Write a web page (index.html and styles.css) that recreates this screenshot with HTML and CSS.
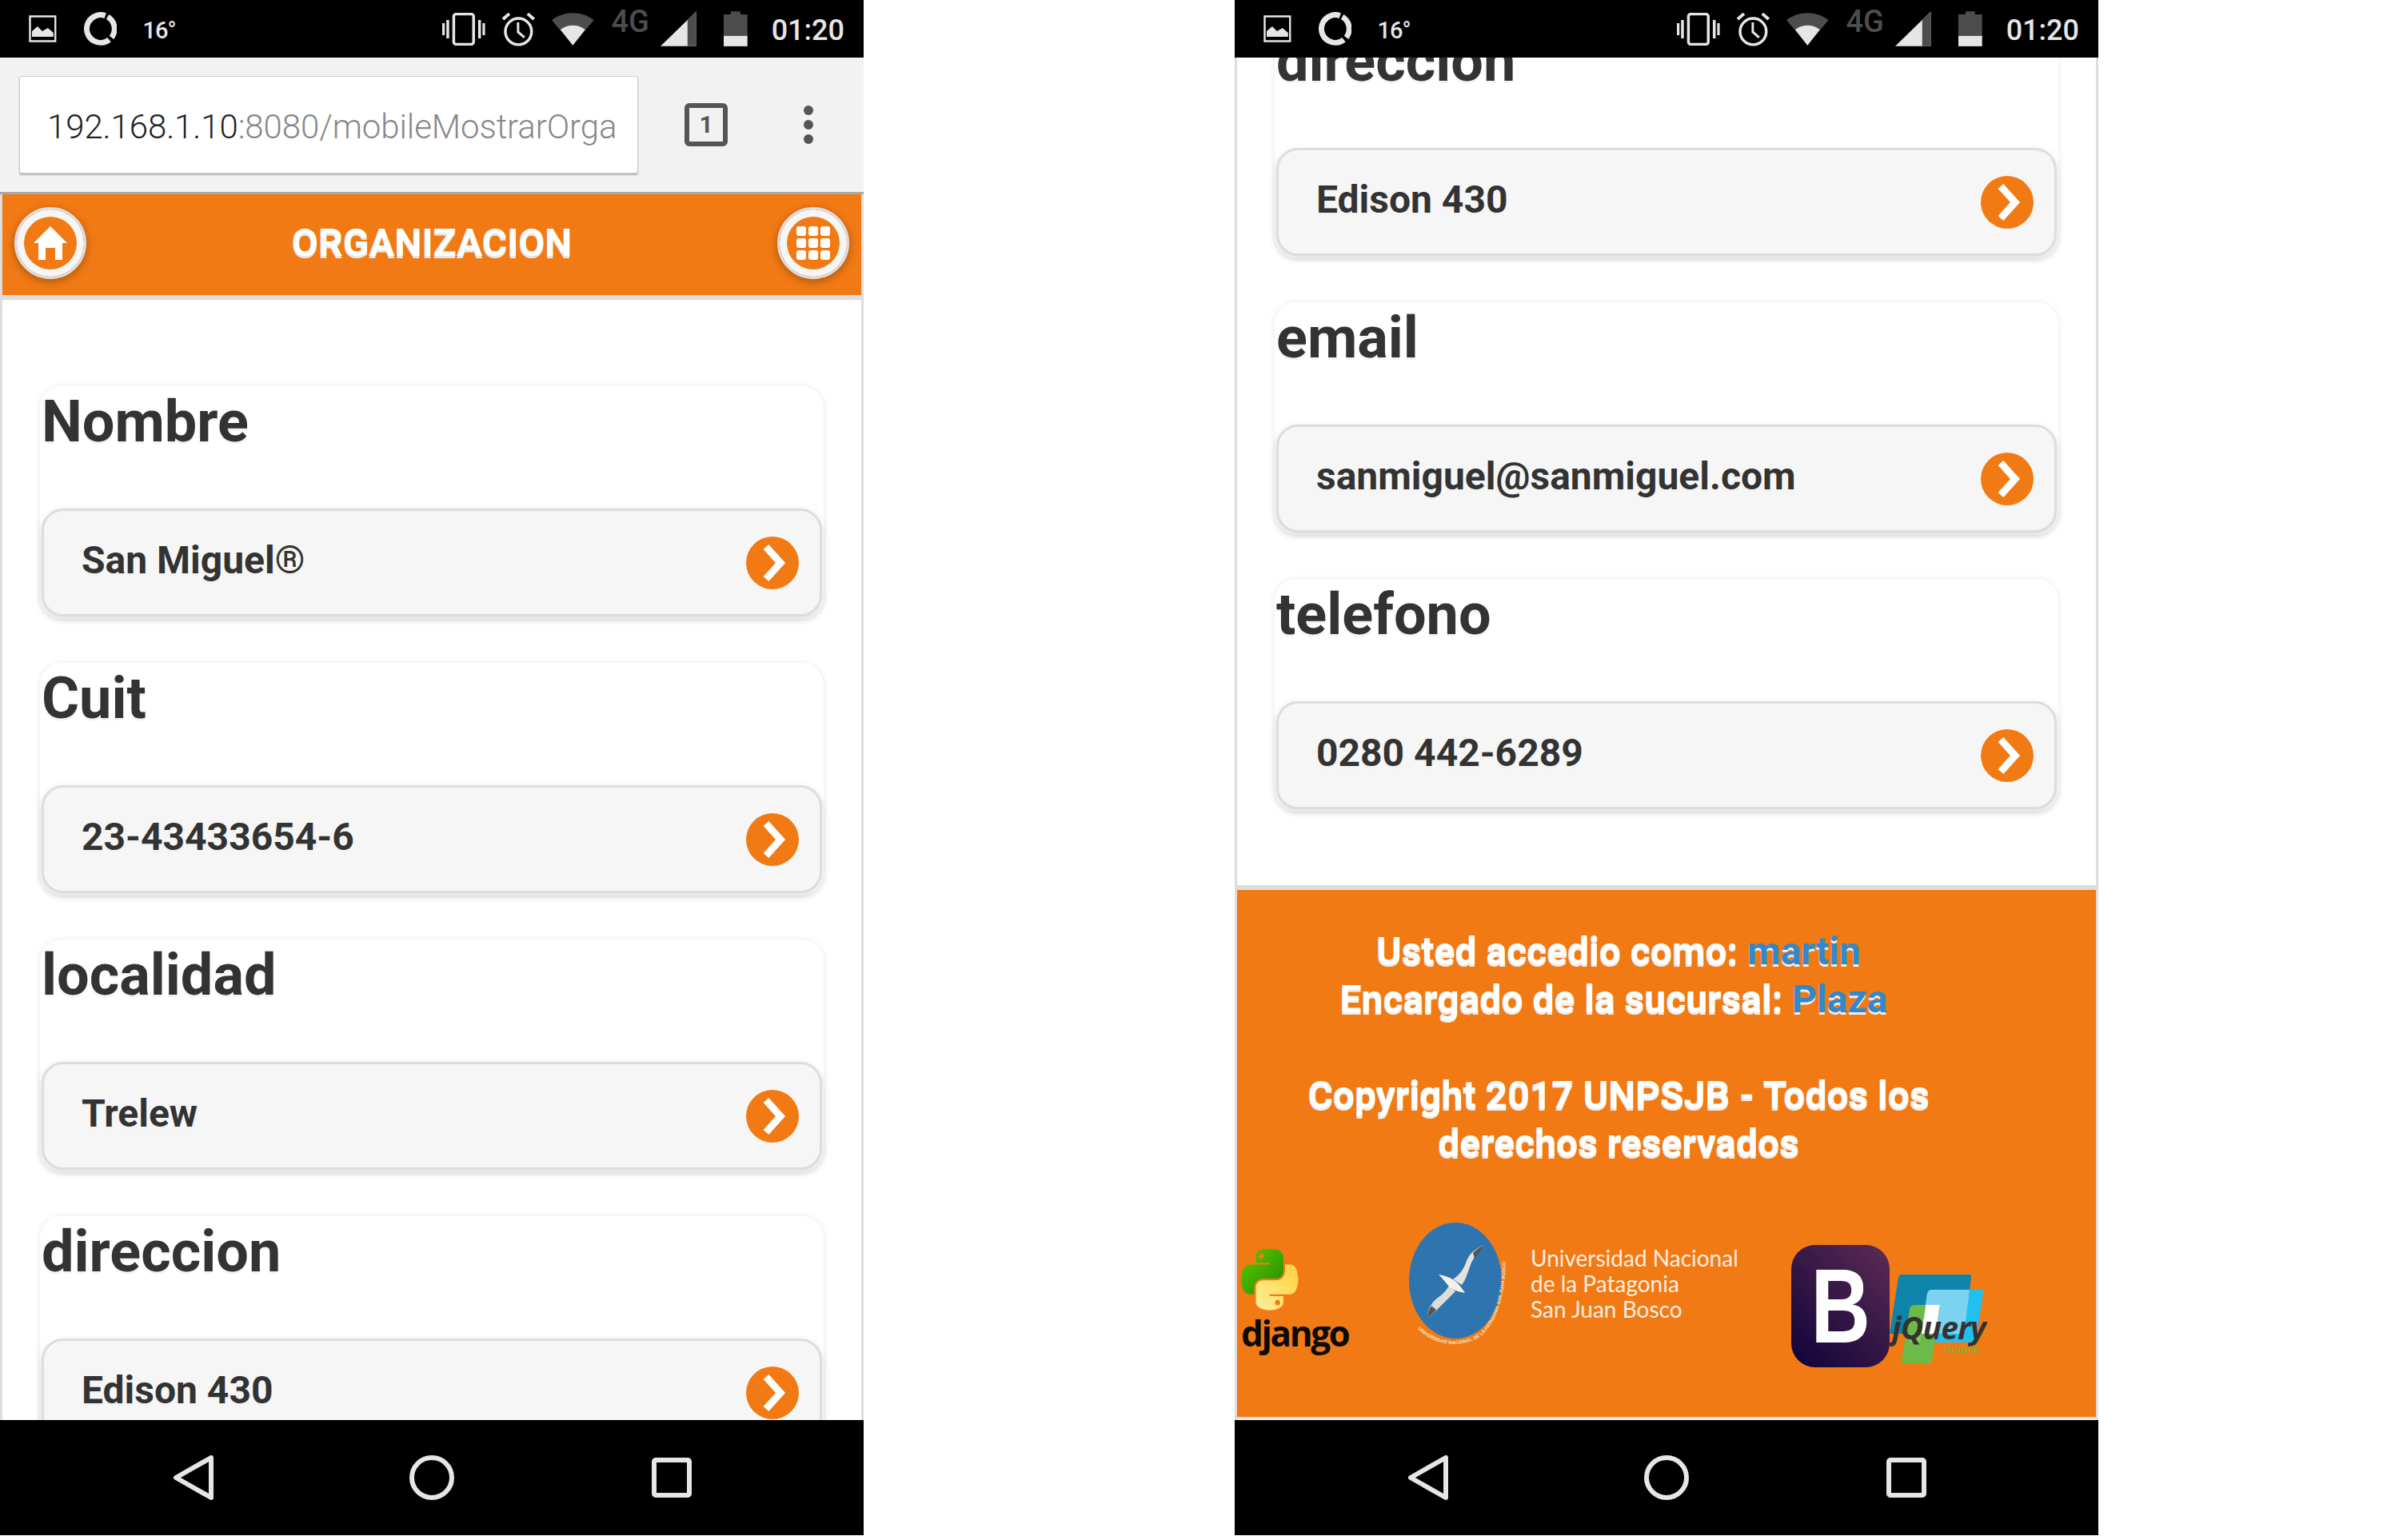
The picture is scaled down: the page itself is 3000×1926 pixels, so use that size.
FILE: index.html
```html
<!DOCTYPE html>
<html lang="es">
<head>
    <meta charset="UTF-8">
    <title>Organizacion</title>
    <link rel="stylesheet" href="styles.css">
</head>
<body>

<svg class="defs" width="0" height="0">
    <symbol id="i-image" viewBox="0 0 35 34">
        <path d="M1.5 1.5H33.5V32.5H1.5Z" fill="none" stroke="#e6e6e6" stroke-width="2.5"/>
        <path d="M4 27V20L11 14L17 20L24 16L31 22V27Z" fill="#e6e6e6"/>
    </symbol>
    <symbol id="i-sync" viewBox="0 0 42 42">
        <circle cx="21" cy="21" r="17.5" fill="none" stroke="#e6e6e6" stroke-width="7" stroke-dasharray="30 4 72 4" transform="rotate(-60 21 21)"/>
    </symbol>
    <symbol id="i-vibrate" viewBox="0 0 54 41">
        <rect x="14.5" y="1.5" width="25" height="38" rx="3" fill="none" stroke="#e6e6e6" stroke-width="3.5"/>
        <path d="M7 9V32M1.5 13V28M47 9V32M52.5 13V28" stroke="#e6e6e6" stroke-width="3.5"/>
    </symbol>
    <symbol id="i-alarm" viewBox="0 0 43 43">
        <circle cx="21.5" cy="24.5" r="16.5" fill="none" stroke="#e6e6e6" stroke-width="3.5"/>
        <path d="M21 13V25L29 32" fill="none" stroke="#e6e6e6" stroke-width="3"/>
        <path d="M2 9L10 2M41 9L33 2" stroke="#e6e6e6" stroke-width="4"/>
    </symbol>
    <symbol id="i-wifi" viewBox="0 0 53 41">
        <path d="M26.5 41L0 9C15 -3 38 -3 53 9Z" fill="#4d4d4d"/>
        <path d="M26.5 41L11 21C20 14 33 14 42 21Z" fill="#e6e6e6"/>
    </symbol>
    <symbol id="i-signal" viewBox="0 0 45 44">
        <path d="M0 44L45 0V44Z" fill="#e6e6e6"/>
        <path d="M34 11L45 0V44H34Z" fill="#4d4d4d"/>
    </symbol>
    <symbol id="i-battery" viewBox="0 0 30 44">
        <path d="M0 4H9V0H21V4H30V44H0Z" fill="#4d4d4d"/>
        <rect y="31" width="30" height="13" fill="#e6e6e6"/>
    </symbol>
    <symbol id="i-back" viewBox="0 0 56 56">
        <path d="M52 3V53L8 28Z" fill="none" stroke="#e6e6e6" stroke-width="6" stroke-linejoin="round"/>
    </symbol>
    <symbol id="i-circle" viewBox="0 0 56 56">
        <circle cx="28" cy="28" r="25" fill="none" stroke="#e6e6e6" stroke-width="6"/>
    </symbol>
    <symbol id="i-square" viewBox="0 0 56 56">
        <rect x="6" y="6" width="44" height="44" rx="2" fill="none" stroke="#e6e6e6" stroke-width="6"/>
    </symbol>
    <symbol id="i-home" viewBox="0 0 84 84">
        <path d="M42 21L63 42H57V63H48V48H36V63H27V42H21Z" fill="#fff"/>
    </symbol>
    <symbol id="i-grid" viewBox="0 0 84 84">
        <g fill="#fff">
            <rect x="21" y="21" width="12" height="12" rx="3"/><rect x="36" y="21" width="12" height="12" rx="3"/><rect x="51" y="21" width="12" height="12" rx="3"/>
            <rect x="21" y="36" width="12" height="12" rx="3"/><rect x="36" y="36" width="12" height="12" rx="3"/><rect x="51" y="36" width="12" height="12" rx="3"/>
            <rect x="21" y="51" width="12" height="12" rx="3"/><rect x="36" y="51" width="12" height="12" rx="3"/><rect x="51" y="51" width="12" height="12" rx="3"/>
        </g>
    </symbol>
    <symbol id="i-go" viewBox="0 0 66 66">
        <circle cx="33" cy="33" r="33" fill="#f27a14"/>
        <path d="M25 13L43 33L25 53" fill="none" stroke="#fff" stroke-width="9"/>
    </symbol>
</svg>

<div class="phone">
    <div class="status">
        <svg class="st-image"><use href="#i-image"/></svg>
        <svg class="st-sync"><use href="#i-sync"/></svg>
        <span class="st-temp">16°</span>
        <svg class="st-vibrate"><use href="#i-vibrate"/></svg>
        <svg class="st-alarm"><use href="#i-alarm"/></svg>
        <svg class="st-wifi"><use href="#i-wifi"/></svg>
        <span class="st-net">4G</span>
        <svg class="st-signal"><use href="#i-signal"/></svg>
        <svg class="st-battery"><use href="#i-battery"/></svg>
        <span class="st-time">01:20</span>
    </div>
    <div class="toolbar">
        <div class="url"><span class="url-host">192.168.1.10</span>:8080/mobileMostrarOrga</div>
        <div class="tabs">1</div>
        <div class="menu"><i></i><i></i><i></i></div>
    </div>
    <div class="screen">
        <div class="head">
            <a class="round"><svg><use href="#i-home"/></svg></a>
            <h1>ORGANIZACION</h1>
            <a class="round"><svg><use href="#i-grid"/></svg></a>
        </div>
        <div class="list">
            <div class="card">
                <h2>Nombre</h2>
                <div class="item"><span>San Miguel®</span><svg><use href="#i-go"/></svg></div>
            </div>
            <div class="card">
                <h2>Cuit</h2>
                <div class="item"><span>23-43433654-6</span><svg><use href="#i-go"/></svg></div>
            </div>
            <div class="card">
                <h2>localidad</h2>
                <div class="item"><span>Trelew</span><svg><use href="#i-go"/></svg></div>
            </div>
            <div class="card">
                <h2>direccion</h2>
                <div class="item"><span>Edison 430</span><svg><use href="#i-go"/></svg></div>
            </div>
        </div>
    </div>
    <div class="nav">
        <svg><use href="#i-back"/></svg>
        <svg><use href="#i-circle"/></svg>
        <svg><use href="#i-square"/></svg>
    </div>
</div>

<div class="phone">
    <div class="status">
        <svg class="st-image"><use href="#i-image"/></svg>
        <svg class="st-sync"><use href="#i-sync"/></svg>
        <span class="st-temp">16°</span>
        <svg class="st-vibrate"><use href="#i-vibrate"/></svg>
        <svg class="st-alarm"><use href="#i-alarm"/></svg>
        <svg class="st-wifi"><use href="#i-wifi"/></svg>
        <span class="st-net">4G</span>
        <svg class="st-signal"><use href="#i-signal"/></svg>
        <svg class="st-battery"><use href="#i-battery"/></svg>
        <span class="st-time">01:20</span>
    </div>
    <div class="screen">
        <div class="list list-scrolled">
            <div class="card">
                <h2>direccion</h2>
                <div class="item"><span>Edison 430</span><svg><use href="#i-go"/></svg></div>
            </div>
            <div class="card">
                <h2>email</h2>
                <div class="item"><span>sanmiguel@sanmiguel.com</span><svg><use href="#i-go"/></svg></div>
            </div>
            <div class="card">
                <h2>telefono</h2>
                <div class="item"><span>0280 442-6289</span><svg><use href="#i-go"/></svg></div>
            </div>
        </div>
        <div class="foot">
            <p>Usted accedio como: <a>martin</a><br>Encargado de la sucursal: <a>Plaza</a>&nbsp;<br><br>Copyright 2017 UNPSJB - Todos los derechos reservados</p>
            <div class="logos">
                <div class="logo-django">
                    <svg viewBox="0 0 112 113" preserveAspectRatio="none">
                        <defs>
                            <linearGradient id="py-a" x1="0" y1="0" x2="1" y2="1"><stop offset="0" stop-color="#5ccb00"/><stop offset="1" stop-color="#248a00"/></linearGradient>
                            <linearGradient id="py-b" x1="0" y1="1" x2="1" y2="0"><stop offset="0" stop-color="#ffef9a"/><stop offset="1" stop-color="#ffd23c"/></linearGradient>
                        </defs>
                        <path fill="url(#py-a)" d="M54.9 0C50.3 0 46 .4 42.1 1.1 30.8 3.1 28.7 7.3 28.7 15V25.3H55.5V28.7H18.6C10.8 28.7 4 33.3 1.9 42.3-.6 52.5-.7 58.8 1.9 69.5 3.8 77.4 8.3 83.1 16.1 83.1H25.4V70.8C25.4 62 33 54.2 42.1 54.2H68.9C76.3 54.2 82.3 48.1 82.3 40.6V15C82.3 7.8 76.2 2.3 68.9 1.1 64.3.3 59.5 0 54.9 0Z"/>
                        <circle cx="39.7" cy="13" r="5" fill="#f27a14"/>
                        <path fill="url(#py-b)" d="M85.6 28.7V40.6C85.6 49.8 77.8 57.6 68.9 57.6H42.1C34.8 57.6 28.7 63.8 28.7 71.2V96.7C28.7 104 35 108.3 42.1 110.3 50.6 112.8 58.7 113.3 68.9 110.3 75.6 108.4 82.3 104.5 82.3 96.7V86.5H55.5V83.1H95.7C103.5 83.1 106.4 77.7 109.1 69.5 111.9 61.1 111.8 53 109.1 42.3 107.2 34.5 103.5 28.7 95.7 28.7Z"/>
                        <circle cx="71" cy="98.5" r="5" fill="#f27a14"/>
                    </svg>
                    <span>django</span>
                </div>
                <svg class="logo-unp" viewBox="0 0 127 156">
                    <ellipse cx="58" cy="72.5" rx="58" ry="72.5" fill="#2e75b0"/>
                    <path d="M94 28C84 32 76 38 72 48 68 60 62 66 55 71L66 78C72 70 74 60 78 50 82 42 88 36 94 28Z" fill="#e3e3e0"/>
                    <path d="M94 28C88 31 83 34 80 38L82 45C86 40 90 35 94 28Z" fill="#55555a"/>
                    <path d="M23 119C23 108 28 100 36 94 42 90 47 84 50 79L58 86C50 94 44 100 38 106 33 111 28 116 23 119Z" fill="#dcdcd8"/>
                    <path d="M23 119C23 113 25 108 28 104L34 109C31 113 27 116 23 119Z" fill="#55555a"/>
                    <path d="M37 65C44 66 50 68 56 72 62 76 66 82 70 88 63 87 56 85 50 80 46 75 42 70 37 65Z" fill="#f4f1e6"/>
                    <path id="unp-ring" d="M11 133C30 152 60 158 85 145 112 130 124 80 120 28" fill="none"/>
                    <text class="unp-ring-text"><textPath href="#unp-ring">UNIVERSIDAD NACIONAL DE LA PATAGONIA SAN JUAN BOSCO</textPath></text>
                </svg>
                <div class="logo-uni">Universidad Nacional<br>de la Patagonia<br>San Juan Bosco</div>
                <div class="logo-bs"><span>B</span></div>
                <svg class="logo-jq" viewBox="0 0 122 116">
                    <path d="M14 0H100Q103 0 102 4L93 74H0L11 3Q12 0 14 0Z" fill="#0f84ab"/>
                    <path d="M53 19H114Q118 19 117 22L108 82Q107 85 104 85H39L47 24Q48 19 53 19Z" fill="#22c0f1"/>
                    <path d="M53 19H100L93 74H39L47 24Q48 19 53 19Z" fill="#7cd2f1"/>
                    <path d="M32 38H63L53 108Q52 111 49 111H18Q15 111 15 108L25 43Q26 38 32 38Z" fill="#6cbb48"/>
                    <path d="M27 74H39L38 85H25Z" fill="#8ac85c"/>
                    <path d="M45 38H63Q63 38 62 42L58 74H40L45 40Z" fill="#fff"/>
                    <text class="jq-name" x="3" y="81">jQuery</text>
                    <text class="jq-mobile" x="68" y="99">mobile</text>
                </svg>
            </div>
        </div>
    </div>
    <div class="nav">
        <svg><use href="#i-back"/></svg>
        <svg><use href="#i-circle"/></svg>
        <svg><use href="#i-square"/></svg>
    </div>
</div>

</body>
</html>
```

FILE: styles.css
```css
* {
    margin: 0;
    padding: 0;
    box-sizing: border-box;
}

body {
    display: flex;
    gap: 464px;
    background-color: white;
    font-family: Roboto, sans-serif;
    color: #333;
}

.defs {
    position: absolute;
}

.phone {
    width: 1080px;
    height: 1920px;
    display: flex;
    flex-direction: column;
    flex-shrink: 0;
    overflow: hidden;
}

/* status bar */
.status {
    height: 72px;
    flex-shrink: 0;
    display: flex;
    align-items: center;
    padding: 0 24px 0 36px;
    background-color: black;
    color: #e6e6e6;
}

.st-image { width: 35px; height: 34px; }
.st-sync { width: 42px; height: 42px; margin-left: 34px; }
.st-temp { width: 40px; margin: 3px 0 0 32px; font-size: 29px; font-weight: 500; letter-spacing: -1px; }
.st-vibrate { width: 54px; height: 41px; margin-left: 335px; }
.st-alarm { width: 43px; height: 43px; margin-left: 20px; }
.st-wifi { width: 53px; height: 41px; margin-left: 20px; }
.st-net { width: 49px; margin: 0 0 18px 22px; font-size: 38px; font-weight: 500; color: #4d4d4d; }
.st-signal { width: 45px; height: 44px; margin-left: 13px; }
.st-battery { width: 30px; height: 44px; margin-left: 34px; }
.st-time { margin: 3px 0 0 30px; font-size: 36px; font-weight: 500; }

/* browser toolbar */
.toolbar {
    height: 171px;
    flex-shrink: 0;
    display: flex;
    align-items: center;
    padding-left: 24px;
    background-color: #f2f2f2;
    border-bottom: 3px solid #aaa;
}

.url {
    width: 774px;
    height: 122px;
    padding: 0 20px 0 34px;
    overflow: hidden;
    background-color: white;
    border: 1px solid #ccc;
    border-radius: 3px;
    box-shadow: 0 2px 2px rgba(0, 0, 0, 0.25);
    font-size: 42px;
    font-weight: 300;
    letter-spacing: -0.1px;
    line-height: 125px;
    white-space: nowrap;
    color: #888;
}

.url-host {
    color: #222;
}

.tabs {
    width: 54px;
    height: 54px;
    margin-left: 58px;
    border: 6px solid #555;
    border-radius: 6px;
    font-size: 30px;
    font-weight: 700;
    line-height: 42px;
    text-align: center;
    color: #555;
}

.menu {
    display: flex;
    flex-direction: column;
    gap: 6px;
    margin-left: 95px;
}

.menu i {
    width: 12px;
    height: 12px;
    border-radius: 50%;
    background-color: #555;
}

/* page */
.screen {
    flex: 1;
    min-height: 0;
    overflow: hidden;
    background-color: white;
    border-left: 3px solid #ddd;
    border-right: 3px solid #ddd;
}

.head {
    height: 132px;
    display: flex;
    align-items: center;
    justify-content: space-between;
    padding: 0 15px 5px;
    background-color: #f27a14;
    border-bottom: 6px solid #ddd;
}

.head h1 {
    font-size: 48px;
    font-weight: 700;
    color: white;
    text-shadow: 0 3px 0 #e8e8e8;
}

.round {
    width: 90px;
    height: 90px;
    padding: 0;
    border: 3px solid #ddd;
    border-radius: 50%;
    background-color: #f27a14;
    box-shadow: inset 0 0 0 9px #f6f6f6, 0 3px 12px rgba(0, 0, 0, 0.3);
}

.round svg {
    display: block;
    width: 84px;
    height: 84px;
}

.list {
    padding: 108px 47px 0;
}

.list-scrolled {
    margin-top: -40px;
    padding-top: 0;
    padding-bottom: 37px;
}

.card {
    height: 291px;
    margin-bottom: 55px;
    background-color: white;
    border-radius: 27px;
    box-shadow: 0 1px 9px rgba(0, 0, 0, 0.1);
}

.card h2 {
    height: 153px;
    padding-left: 2px;
    font-size: 72px;
    font-weight: 700;
    line-height: 90px;
    text-shadow: 0 3px 0 #f3f3f3;
}

.item {
    height: 135px;
    margin: 0 2px;
    display: flex;
    align-items: center;
    justify-content: space-between;
    padding: 0 26px 0 47px;
    background-color: #f6f6f6;
    border: 3px solid #ddd;
    border-radius: 27px;
    box-shadow: 0 3px 9px rgba(0, 0, 0, 0.15);
    font-size: 48px;
    font-weight: 700;
    text-shadow: 0 3px 0 #f3f3f3;
}

.item span {
    padding-bottom: 6px;
}

.item svg {
    width: 66px;
    height: 66px;
}

/* footer */
.foot {
    padding: 47px 0 62px;
    background-color: #f27a14;
    border-top: 6px solid #ddd;
    border-bottom: 3px solid #ddd;
}

.foot p {
    width: 954px;
    font-size: 48px;
    font-weight: 700;
    line-height: 60px;
    text-align: center;
    color: white;
    text-shadow: 0 3px 0 #eee;
}

.foot a {
    color: #38c;
}

.logos {
    display: flex;
    align-items: flex-start;
    height: 181px;
    margin-top: 69px;
}

.logo-django {
    width: 133px;
    margin: 33px 0 0 5px;
}

.logo-django svg {
    display: block;
    width: 72px;
    height: 77px;
}

.logo-django span {
    display: block;
    margin-top: 3px;
    font-family: "Open Sans", sans-serif;
    font-size: 44px;
    font-weight: 700;
    letter-spacing: -2.4px;
    line-height: 50px;
    color: #0b0b0b;
}

.logo-unp {
    width: 127px;
    height: 156px;
    margin-left: 77px;
}

.unp-ring-text {
    font-family: "Liberation Sans", sans-serif;
    font-size: 6px;
    font-weight: 700;
    fill: #f6e6d2;
}

.logo-uni {
    width: 258px;
    margin: 28px 0 0 25px;
    font-family: Lato, sans-serif;
    font-size: 28px;
    line-height: 32px;
    white-space: nowrap;
    color: #fdeee0;
}

.logo-bs {
    width: 123px;
    height: 153px;
    margin: 28px 0 0 68px;
    border-radius: 30px;
    background: linear-gradient(45deg, #0e0338, #5c2b54);
    font-family: "Liberation Sans", sans-serif;
    font-size: 132px;
    font-weight: 700;
    line-height: 153px;
    text-align: center;
    color: white;
}

.logo-bs span {
    display: inline-block;
    transform: scaleX(0.78);
}

.logo-jq {
    width: 122px;
    height: 116px;
    margin-top: 65px;
}

.jq-name {
    font-family: "Open Sans", sans-serif;
    font-size: 39px;
    font-weight: 700;
    font-style: italic;
    letter-spacing: -0.8px;
    fill: #333;
}

.jq-mobile {
    font-family: "Open Sans", sans-serif;
    font-size: 15px;
    font-style: italic;
    fill: #6cbb48;
}

/* android nav */
.nav {
    height: 144px;
    flex-shrink: 0;
    display: flex;
    align-items: center;
    justify-content: center;
    gap: 244px;
    background-color: black;
}

.nav svg {
    width: 56px;
    height: 56px;
}
```
